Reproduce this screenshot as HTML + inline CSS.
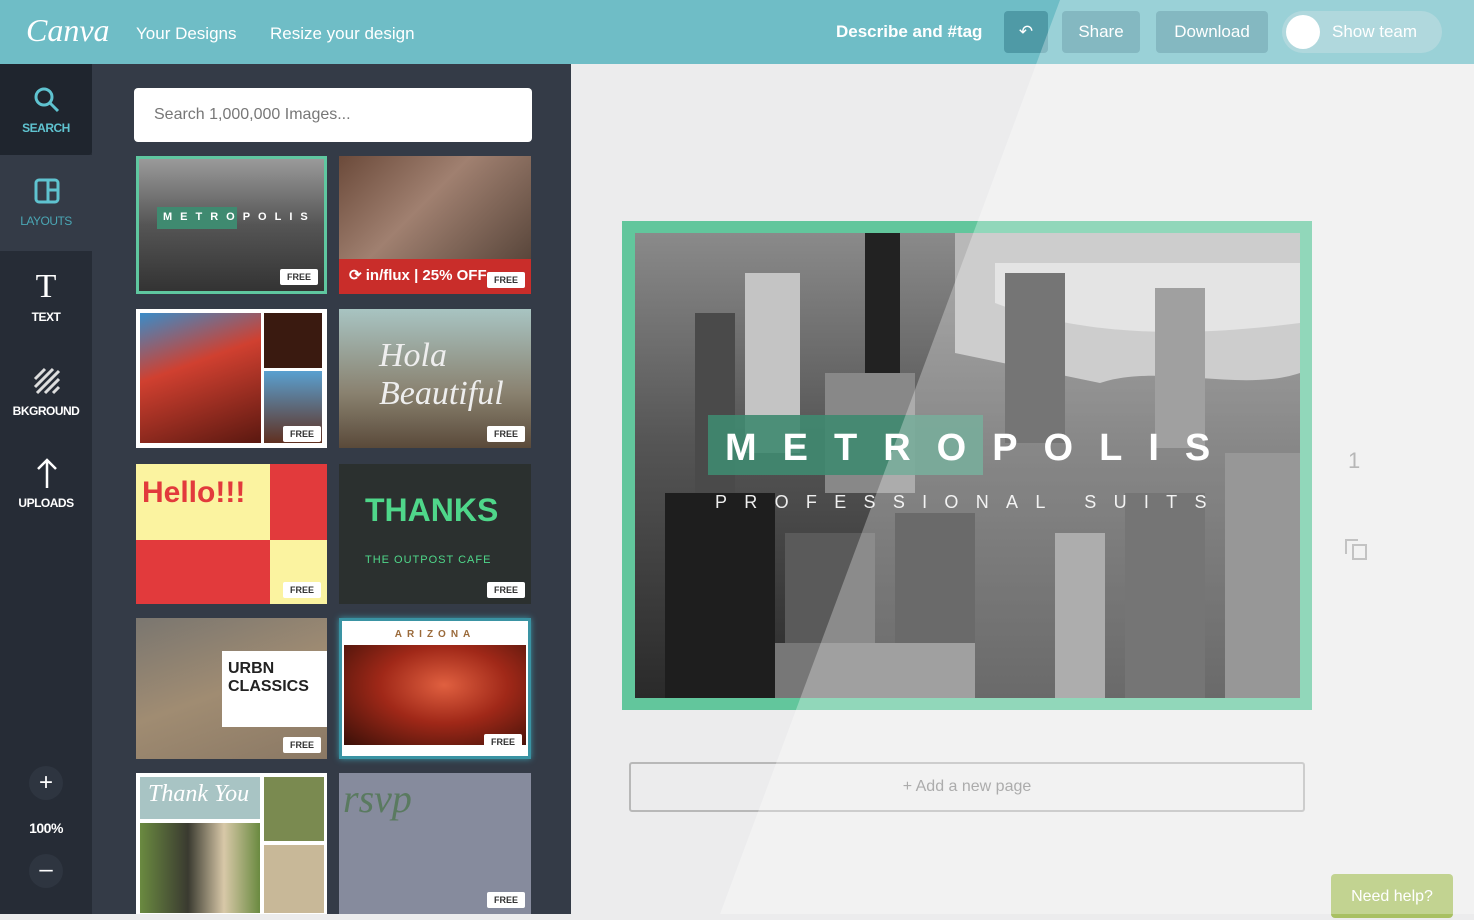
<!DOCTYPE html>
<html><head><meta charset="utf-8"><style>
*{margin:0;padding:0;box-sizing:border-box}
body{width:1474px;height:914px;overflow:hidden;background:#ececed;font-family:"Liberation Sans",sans-serif;position:relative}
.abs{position:absolute}
.top{left:0;top:0;width:1474px;height:64px;background:#6fbdc6}
.btn{top:11px;height:42px;background:#4f9aa6;border-radius:4px;color:#fff;font-size:17px;text-align:center;line-height:42px}
.side{left:0;top:64px;width:92px;height:850px;background:#262c36}
.panel{left:92px;top:64px;width:479px;height:850px;background:#343b47}
.lab{width:92px;text-align:center;color:#fff;font-size:12px;font-weight:bold;letter-spacing:-0.5px}
.th{position:absolute;overflow:hidden}
.free{position:absolute;right:6px;bottom:6px;width:38px;height:16px;background:#fff;border-radius:2px;color:#333;font-size:9px;font-weight:bold;text-align:center;line-height:16px}
</style></head><body>
<div class="abs top"></div>
<div class="abs" style="left:26px;top:12px;color:#fff;font-family:'Liberation Serif',serif;font-style:italic;font-size:32px">Canva</div>
<div class="abs" style="left:136px;top:24px;color:#fff;font-size:17px">Your Designs</div>
<div class="abs" style="left:270px;top:24px;color:#fff;font-size:17px">Resize your design</div>
<div class="abs" style="left:836px;top:22px;color:#fff;font-size:17px;font-weight:bold">Describe and #tag</div>
<div class="abs btn" style="left:1004px;width:44px">↶</div>
<div class="abs btn" style="left:1062px;width:78px">Share</div>
<div class="abs btn" style="left:1156px;width:112px">Download</div>
<div class="abs btn" style="left:1282px;width:160px;border-radius:21px;background:#8fc8cf"></div>
<div class="abs" style="left:1286px;top:15px;width:34px;height:34px;border-radius:50%;background:#fff"></div>
<div class="abs" style="left:1332px;top:22px;color:#fff;font-size:17px">Show team</div>

<div class="abs side"></div>
<div class="abs" style="left:0;top:64px;width:92px;height:91px;background:#1f252e;border-radius:0 0 4px 0"></div>
<div class="abs" style="left:0;top:155px;width:92px;height:96px;background:#343b47"></div>
<div class="abs panel"></div>
<svg class="abs" style="left:33px;top:86px" width="28" height="28" viewBox="0 0 28 28"><circle cx="11" cy="11" r="8" fill="none" stroke="#5fc3d0" stroke-width="3"/><path d="M17 17l8 8" stroke="#5fc3d0" stroke-width="3"/></svg>
<div class="abs lab" style="top:121px;color:#5fc3d0">SEARCH</div>
<svg class="abs" style="left:34px;top:178px" width="26" height="26"><rect x="2" y="2" width="22" height="22" rx="3" fill="none" stroke="#5fc3d0" stroke-width="3"/><path d="M14 3v20M15 12h8" stroke="#5fc3d0" stroke-width="3"/></svg>
<div class="abs lab" style="top:214px;color:#4aa6b4;font-weight:normal">LAYOUTS</div>
<div class="abs" style="left:0;top:268px;width:92px;text-align:center;color:#fff;font-family:'Liberation Serif',serif;font-size:34px">T</div>
<div class="abs lab" style="top:310px">TEXT</div>
<svg class="abs" style="left:33px;top:367px" width="28" height="28"><path d="M2 12L12 2M2 20L20 2M4 26L26 4M12 26L26 12M20 26L26 20" stroke="#ddd" stroke-width="3"/></svg>
<div class="abs lab" style="top:404px">BKGROUND</div>
<svg class="abs" style="left:35px;top:458px" width="24" height="30"><path d="M12 2v28M3 11l9-9 9 9" stroke="#fff" stroke-width="2.5" fill="none"/></svg>
<div class="abs lab" style="top:496px">UPLOADS</div>
<div class="abs" style="left:29px;top:766px;width:34px;height:34px;border-radius:50%;background:#2e3540;color:#fff;text-align:center;line-height:34px;font-size:24px">+</div>
<div class="abs lab" style="top:820px;font-size:14px">100%</div>
<div class="abs" style="left:29px;top:854px;width:34px;height:34px;border-radius:50%;background:#2e3540;color:#fff;text-align:center;line-height:32px;font-size:24px">–</div>

<div class="abs" style="left:134px;top:88px;width:398px;height:54px;background:#fff;border-radius:4px;color:#777;font-size:16px;line-height:54px;padding-left:20px">Search 1,000,000 Images...</div>

<div class="th" style="left:136px;top:156px;width:191px;height:138px;border:3px solid #5fc7a0;background:linear-gradient(#9a9a9a,#555 50%,#333)"><div class="abs" style="left:18px;top:48px;width:80px;height:22px;background:#3f8a70"></div><div class="abs" style="left:24px;top:52px;color:#fff;font-size:11px;letter-spacing:8px;font-weight:bold">METROPOLIS</div><div class="free">FREE</div></div>
<div class="th" style="left:339px;top:156px;width:192px;height:138px;background:linear-gradient(135deg,#6b4a3a,#a08070 40%,#4a3a30)"><div class="abs" style="left:0;bottom:0;width:192px;height:35px;background:#c92d2a"></div><div class="abs" style="left:10px;bottom:10px;color:#fff;font-size:15px;font-weight:bold">⟳ in/flux | 25% OFF</div><div class="free">FREE</div></div>
<div class="th" style="left:136px;top:309px;width:191px;height:139px;background:#fff;padding:4px"><div style="position:absolute;left:4px;top:4px;width:121px;height:130px;background:linear-gradient(160deg,#3a8cc8,#d04030 40%,#5a1810)"></div><div style="position:absolute;left:128px;top:4px;width:58px;height:55px;background:#3a1a10"></div><div style="position:absolute;left:128px;top:62px;width:58px;height:72px;background:linear-gradient(#5aa0d0,#603020)"></div><div class="free">FREE</div></div>
<div class="th" style="left:339px;top:309px;width:192px;height:139px;background:linear-gradient(#a8c4c2,#8a8270 60%,#5a4a3a)"><div class="abs" style="left:40px;top:28px;color:#eee;font-family:'Liberation Serif',serif;font-style:italic;font-size:34px">Hola<br>Beautiful</div><div class="free">FREE</div></div>
<div class="th" style="left:136px;top:464px;width:191px;height:140px;background:#e23a3c"><div class="abs" style="left:0;top:0;width:134px;height:76px;background:#fbf3a0"></div><div class="abs" style="left:134px;top:76px;width:57px;height:64px;background:#fbf3a0"></div><div class="abs" style="left:6px;top:12px;color:#e23a3c;font-size:30px;font-weight:bold">Hello!!!</div><div class="free">FREE</div></div>
<div class="th" style="left:339px;top:464px;width:192px;height:140px;background:#2b302f"><div class="abs" style="left:26px;top:28px;color:#4fd78a;font-size:32px;font-weight:bold">THANKS</div><div class="abs" style="left:26px;top:90px;color:#4fd78a;font-size:11px;letter-spacing:1px">THE OUTPOST CAFE</div><div class="free">FREE</div></div>
<div class="th" style="left:136px;top:618px;width:191px;height:141px;background:linear-gradient(160deg,#7a7670,#a08c72 50%,#8a7864)"><div class="abs" style="left:86px;top:33px;width:105px;height:76px;background:#fff"></div><div class="abs" style="left:92px;top:42px;color:#222;font-size:16px;font-weight:bold">URBN CLASSICS</div><div class="free">FREE</div></div>
<div class="th" style="left:339px;top:618px;width:192px;height:141px;background:#fff;border:3px solid #3a93a3;box-shadow:0 0 6px #3a93a3"><div class="abs" style="left:0;top:8px;width:186px;text-align:center;color:#9a6a3a;font-size:10px;letter-spacing:5px;font-weight:bold">ARIZONA</div><div class="abs" style="left:2px;top:24px;width:182px;height:100px;background:radial-gradient(ellipse at 55% 40%,#e06040,#a02818 45%,#3a1008)"></div><div class="free">FREE</div></div>
<div class="th" style="left:136px;top:773px;width:191px;height:141px;background:#fff"><div class="abs" style="left:4px;top:4px;width:120px;height:42px;background:#a8c4c4"></div><div class="abs" style="left:12px;top:8px;color:#fff;font-family:'Liberation Serif',serif;font-style:italic;font-size:24px">Thank You</div><div class="abs" style="left:4px;top:50px;width:120px;height:90px;background:linear-gradient(90deg,#6a8a40,#3a3a30 40%,#d8c8a8 70%,#6a8a40)"></div><div class="abs" style="left:128px;top:4px;width:60px;height:64px;background:#7a8a50"></div><div class="abs" style="left:128px;top:72px;width:60px;height:68px;background:#c8b898"></div></div>
<div class="th" style="left:339px;top:773px;width:192px;height:141px;background:#868b9d"><div class="abs" style="left:4px;top:2px;color:#5a7a60;font-family:'Liberation Serif',serif;font-style:italic;font-size:40px">rsvp</div><div class="free">FREE</div></div>

<div class="abs" style="left:622px;top:221px;width:690px;height:489px;background:#62c69c"></div>
<svg class="abs" style="left:635px;top:233px" width="665" height="465" viewBox="0 0 665 465">
<defs><linearGradient id="g" x1="0" y1="0" x2="0" y2="1"><stop offset="0" stop-color="#8a8a8a"/><stop offset="0.45" stop-color="#555"/><stop offset="1" stop-color="#2a2a2a"/></linearGradient></defs>
<rect width="665" height="465" fill="url(#g)"/>
<path d="M320 0h345v140c-60 20-140-10-200 10L320 120z" fill="#b8b8b8"/>
<path d="M360 30h305v60c-80 10-200 20-305-20z" fill="#d8d8d8"/>
<rect x="230" y="0" width="35" height="240" fill="#222"/>
<rect x="110" y="40" width="55" height="180" fill="#c4c4c4"/>
<rect x="60" y="80" width="40" height="200" fill="#4a4a4a"/>
<rect x="370" y="40" width="60" height="170" fill="#3a3a3a"/>
<rect x="520" y="55" width="50" height="160" fill="#777"/>
<rect x="190" y="140" width="90" height="120" fill="#888"/>
<rect x="30" y="260" width="110" height="205" fill="#1e1e1e"/>
<rect x="150" y="300" width="90" height="165" fill="#5a5a5a"/>
<rect x="260" y="280" width="80" height="185" fill="#2a2a2a"/>
<rect x="420" y="300" width="50" height="165" fill="#8a8a8a"/>
<rect x="490" y="260" width="80" height="205" fill="#3a3a3a"/>
<rect x="590" y="220" width="75" height="245" fill="#6a6a6a"/>
<rect x="140" y="410" width="200" height="55" fill="#777"/>
<rect x="73" y="182" width="275" height="60" fill="#3f8a70" opacity="0.9"/>
<text x="90" y="227" fill="#fff" font-family="Liberation Sans" font-weight="bold" font-size="38" letter-spacing="26">METROPOLIS</text>
<text x="80" y="275" fill="#eee" font-family="Liberation Sans" font-size="18" letter-spacing="17.3">PROFESSIONAL SUITS</text>
</svg>
<div class="abs" style="left:1348px;top:448px;color:#999;font-size:22px">1</div>
<svg class="abs" style="left:1344px;top:536px" width="26" height="26"><path d="M2 18V4h12" fill="none" stroke="#aaa" stroke-width="2"/><rect x="9" y="9" width="13" height="14" fill="none" stroke="#aaa" stroke-width="2"/></svg>
<div class="abs" style="left:629px;top:762px;width:676px;height:50px;border:2px solid #b8b8b8;border-radius:3px;text-align:center;line-height:46px;color:#888;font-size:16px">+ Add a new page</div>
<div class="abs" style="left:1331px;top:874px;width:122px;height:44px;background:#a8c062;border-radius:4px;color:#fff;font-size:16px;text-align:center;line-height:46px">Need help?</div>
<svg class="abs" style="left:0;top:0" width="1474" height="914"><polygon points="1060,0 1474,0 1474,914 720,914" fill="#fff" opacity="0.3"/></svg>
</body></html>
